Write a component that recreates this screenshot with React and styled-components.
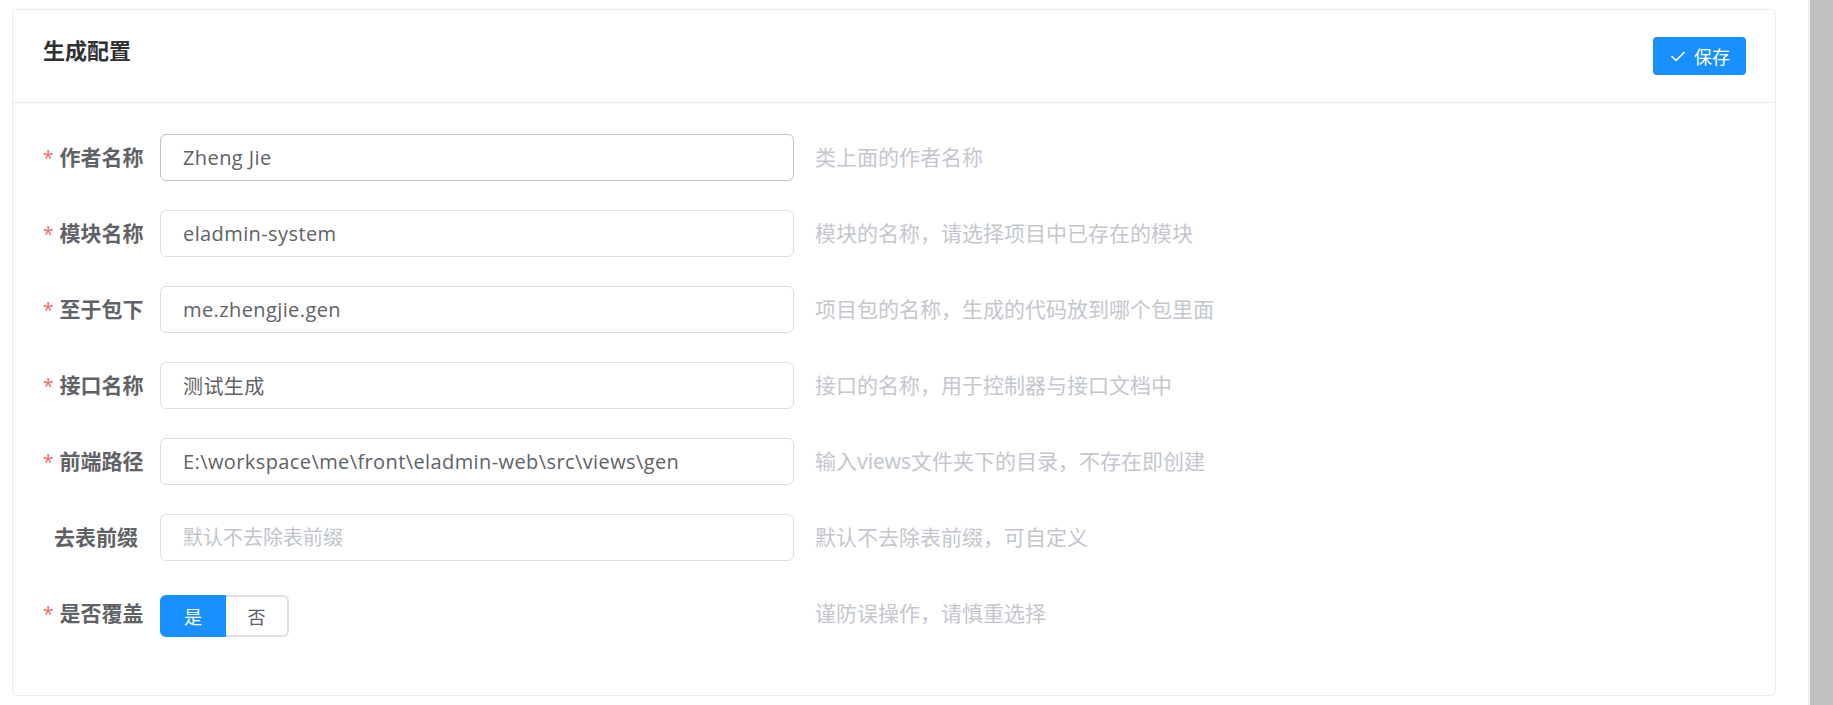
import React from 'react'
import styled, { createGlobalStyle } from 'styled-components'

const GlobalStyle = createGlobalStyle`
  html, body {
    margin: 0;
    padding: 0;
    background: #ffffff;
    font-family: "Noto Sans", "Noto Sans CJK SC", sans-serif;
  }
`

const fields = [
  { label: '作者名称', value: 'Zheng Jie', hint: '类上面的作者名称', required: true, hovered: true },
  { label: '模块名称', value: 'eladmin-system', hint: '模块的名称，请选择项目中已存在的模块', required: true },
  { label: '至于包下', value: 'me.zhengjie.gen', hint: '项目包的名称，生成的代码放到哪个包里面', required: true },
  { label: '接口名称', value: '测试生成', hint: '接口的名称，用于控制器与接口文档中', required: true },
  { label: '前端路径', value: 'E:\\workspace\\me\\front\\eladmin-web\\src\\views\\gen', hint: '输入views文件夹下的目录，不存在即创建', required: true },
  { label: '去表前缀', value: '', placeholder: '默认不去除表前缀', hint: '默认不去除表前缀，可自定义' },
]

const CheckIcon = () => (
  <svg width="14" height="11" viewBox="0 0 14 11" fill="none">
    <polyline points="1,5.5 5,9.5 13,1.5" stroke="#ffffff" strokeWidth="1.6" strokeLinecap="round" strokeLinejoin="round" />
  </svg>
)

export default function App() {
  return (
    <Page>
      <GlobalStyle />
      <Main>
        <Card>
          <CardHeader>
            <Title>生成配置</Title>
            <SaveButton>
              <CheckIcon />
              <span>保存</span>
            </SaveButton>
          </CardHeader>
          <CardBody>
            {fields.map(f => (
              <FormItem key={f.label}>
                <Label>
                  {f.required && <Star>*</Star>}
                  {f.label}
                </Label>
                <Control>
                  <Input
                    readOnly
                    defaultValue={f.value}
                    placeholder={f.placeholder}
                    $hovered={f.hovered}
                  />
                </Control>
                <Hint>{f.hint}</Hint>
              </FormItem>
            ))}
            <FormItem $last>
              <Label>
                <Star>*</Star>是否覆盖
              </Label>
              <Control>
                <RadioGroup>
                  <RadioButton $active>是</RadioButton>
                  <RadioButton>否</RadioButton>
                </RadioGroup>
              </Control>
              <Hint>谨防误操作，请慎重选择</Hint>
            </FormItem>
          </CardBody>
        </Card>
      </Main>
      <Scrollbar />
    </Page>
  )
}

// STYLES
const Page = styled.div`
  display: flex;
  width: 100%;
  height: 705px;
  overflow: hidden;
`

const Main = styled.div`
  flex: 1;
  padding: 9px 32px 0 12px;
`

const Scrollbar = styled.div`
  width: 23px;
  height: 705px;
  background: #c1c1c1;
  border-left: 2px solid #f1f1f1;
`

const Card = styled.div`
  border: 1px solid #e6ebf5;
  border-radius: 6px;
  background: #ffffff;
`

const CardHeader = styled.div`
  display: flex;
  justify-content: space-between;
  align-items: flex-start;
  box-sizing: border-box;
  height: 93px;
  padding: 25px 29px 0 30px;
  border-bottom: 1px solid #e6ebf5;
`

const Title = styled.span`
  font-size: 22px;
  line-height: 30px;
  font-weight: 700;
  color: #303133;
`

const SaveButton = styled.button`
  display: flex;
  align-items: center;
  gap: 9px;
  height: 38px;
  margin-top: 2px;
  padding: 0 16px 0 18px;
  border: none;
  border-radius: 4px;
  background: #1890ff;
  color: #ffffff;
  font-family: inherit;
  font-size: 18px;
  cursor: pointer;
`

const CardBody = styled.div`
  padding: 31px 30px 58px 30px;
`

const FormItem = styled.div`
  display: flex;
  align-items: ${p => (p.$last ? 'flex-start' : 'center')};
  height: 47px;
  margin-bottom: ${p => (p.$last ? '0' : '29px')};
`

const Label = styled.label`
  box-sizing: border-box;
  width: 117px;
  padding-right: 22px;
  text-align: right;
  font-size: 21px;
  line-height: 47px;
  font-weight: 700;
  color: #606266;
  white-space: nowrap;
`

const Star = styled.span`
  color: #f56c6c;
  margin-right: 6px;
  font-weight: 400;
  font-size: 19px;
`

const Control = styled.div`
  width: 634px;
  flex-shrink: 0;
`

const Input = styled.input`
  display: block;
  box-sizing: border-box;
  width: 100%;
  height: 47px;
  padding: 0 22px;
  border: 1px solid ${p => (p.$hovered ? '#c0c4cc' : '#dcdfe6')};
  border-radius: 6px;
  outline: none;
  font-family: "Open Sans", "Noto Sans CJK SC", sans-serif;
  font-size: 20px;
  letter-spacing: 0.4px;
  color: #606266;
  background: #ffffff;
  &::placeholder {
    color: #c0c4cc;
    letter-spacing: 0;
  }
`

const Hint = styled.span`
  margin-left: 21px;
  font-size: 21px;
  line-height: 47px;
  color: #c4c7ce;
  white-space: nowrap;
`

const RadioGroup = styled.div`
  display: flex;
  margin-top: 5px;
`

const RadioButton = styled.span`
  display: flex;
  align-items: center;
  justify-content: center;
  box-sizing: border-box;
  width: ${p => (p.$active ? '66px' : '63px')};
  height: 42px;
  font-size: 18px;
  color: ${p => (p.$active ? '#ffffff' : '#606266')};
  background: ${p => (p.$active ? '#1890ff' : '#ffffff')};
  border: 2px solid ${p => (p.$active ? '#1890ff' : '#dcdfe6')};
  border-left: ${p => (p.$active ? '' : 'none')};
  border-radius: ${p => (p.$active ? '6px 0 0 6px' : '0 6px 6px 0')};
`
